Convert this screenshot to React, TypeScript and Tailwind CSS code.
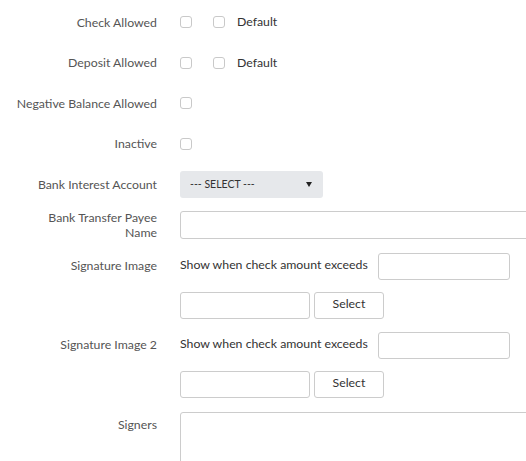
import React from 'react';

const font = { fontFamily: 'Lato, "Noto Sans", sans-serif' };

function Label({ children, className = '' }: { children: React.ReactNode; className?: string }) {
  return (
    <div className={`w-[157px] shrink-0 text-right text-[#555] leading-[15px] ${className}`}>{children}</div>
  );
}

function Box() {
  return <span className="block h-[12px] w-[12px] shrink-0 rounded-[3px] border border-[#c9c9c9] bg-white" />;
}

function CheckRow({ label, withDefault }: { label: string; withDefault?: boolean }) {
  return (
    <div className="flex h-[40.5px] items-center">
      <Label>{label}</Label>
      <div className="ml-[23px] flex items-center">
        <Box />
        {withDefault && (
          <>
            <span className="ml-[21px]">
              <Box />
            </span>
            <span className="ml-[12px] text-[#333]">Default</span>
          </>
        )}
      </div>
    </div>
  );
}

function Input({ className = '' }: { className?: string }) {
  return <div className={`rounded-[3px] border border-[#cccccc] bg-white ${className}`} />;
}

function SignatureBlock({ label }: { label: string }) {
  return (
    <>
      <div className="mt-[13px] flex h-[27px] items-center">
        <Label className="-mt-[1px]">{label}</Label>
        <div className="ml-[23px] flex items-center">
          <span className="-mt-[1px] w-[198px] text-[#333]">Show when check amount exceeds</span>
          <Input className="h-[27px] w-[132px]" />
        </div>
      </div>
      <div className="mt-[12px] flex h-[27px] items-center">
        <div className="w-[157px] shrink-0" />
        <div className="ml-[23px] flex items-center">
          <Input className="h-[27px] w-[130px]" />
          <button className="ml-[4px] flex h-[27px] w-[70px] items-center justify-center rounded-[3px] border border-[#cccccc] bg-white pb-[2px] text-[#333]">
            Select
          </button>
        </div>
      </div>
    </>
  );
}

export default function App() {
  return (
    <div className="h-[461px] w-[526px] overflow-hidden bg-white text-[12.3px]" style={font}>
      <div className="pt-[2px]">
        <CheckRow label="Check Allowed" withDefault />
        <CheckRow label="Deposit Allowed" withDefault />
        <CheckRow label="Negative Balance Allowed" />
        <CheckRow label="Inactive" />
      </div>

      <div className="mt-[7px] flex h-[27px] items-center">
        <Label>Bank Interest Account</Label>
        <div className="ml-[23px] flex h-[27px] w-[143px] items-center justify-between rounded-[3px] bg-[#e6e8eb] pl-[10px] pr-[11px] text-[10.5px] text-[#333]">
          <span>--- SELECT ---</span>
          <svg width="6" height="5" viewBox="0 0 6 5">
            <path d="M0 0h6L3 5z" fill="#222" />
          </svg>
        </div>
      </div>

      <div className="mt-[13px] flex items-start">
        <Label className="-mt-[1.5px]">
          Bank Transfer Payee
          <br />
          Name
        </Label>
        <Input className="ml-[23px] h-[28px] w-[400px] shrink-0" />
      </div>

      <SignatureBlock label="Signature Image" />
      <SignatureBlock label="Signature Image 2" />

      <div className="mt-[14px] flex items-start">
        <Label className="pt-[5px]">Signers</Label>
        <Input className="ml-[23px] h-[90px] w-[400px] shrink-0" />
      </div>
    </div>
  );
}
